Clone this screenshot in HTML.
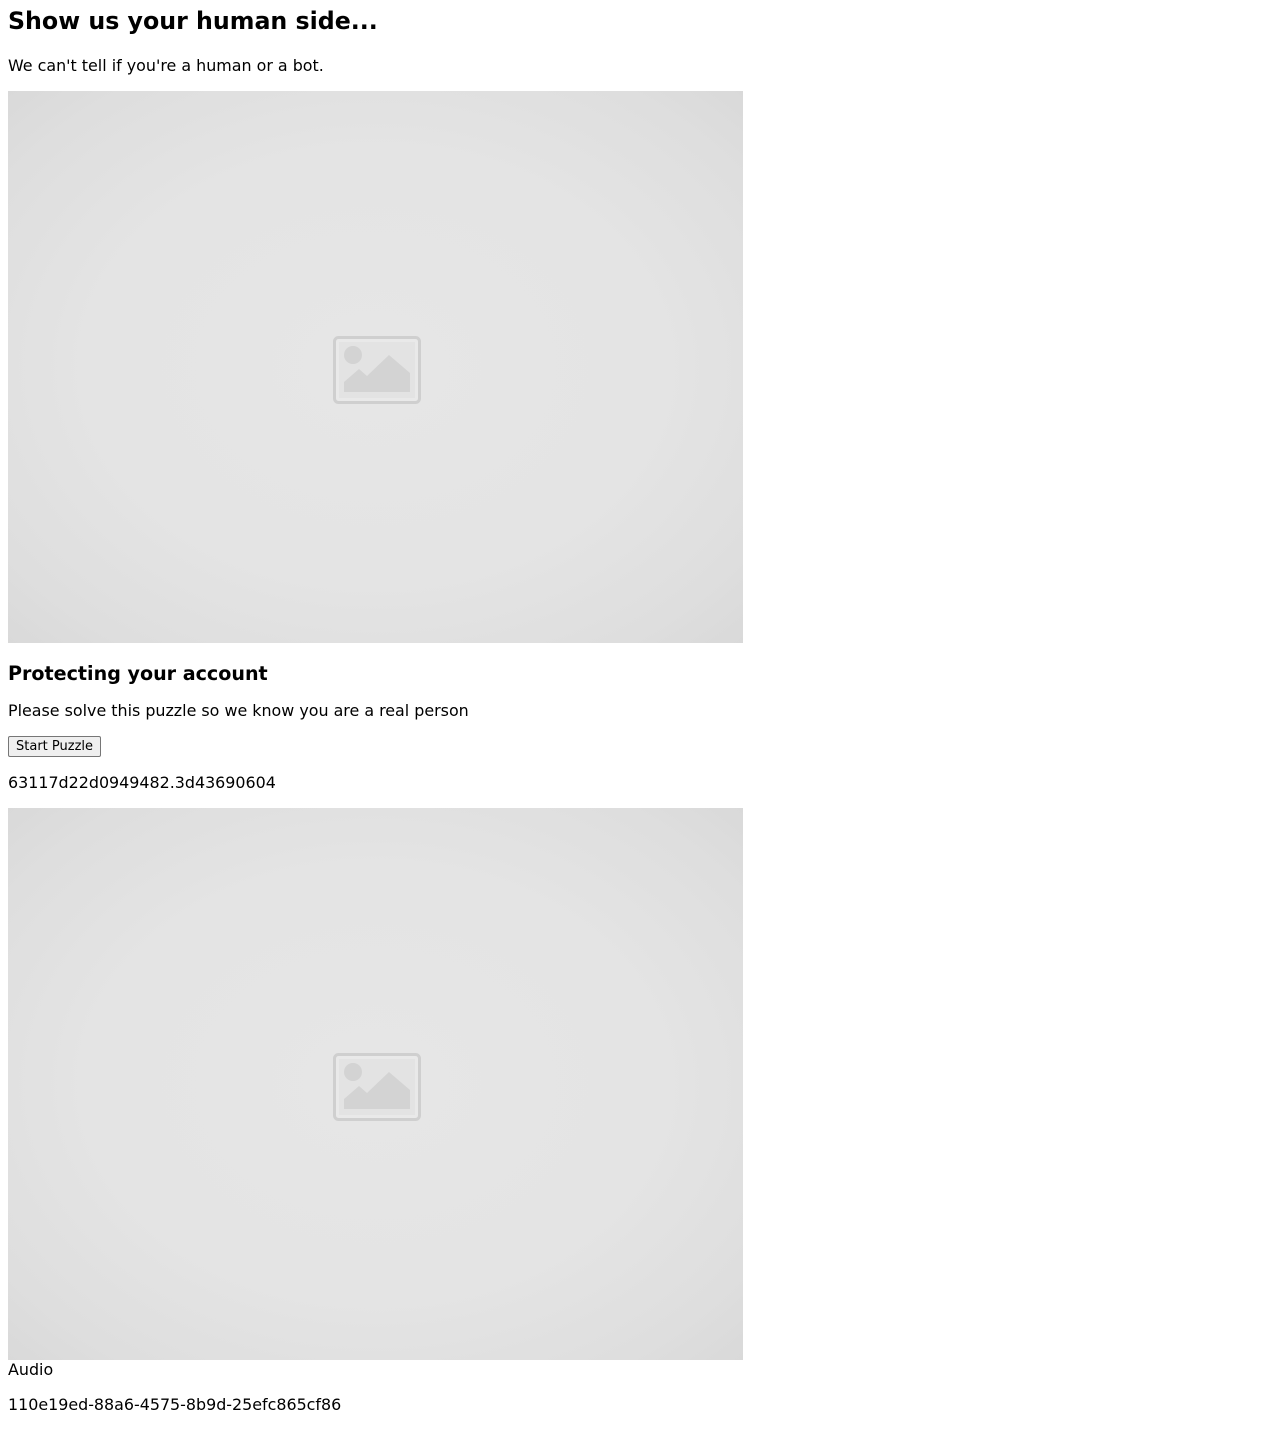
<!DOCTYPE html>
<html><head><meta charset="utf-8"><style>
html,body{margin:0;padding:0;background:#fff;width:1280px;height:1430px;overflow:hidden}
body{font-family:"DejaVu Sans","Liberation Sans",sans-serif;color:#000;position:relative}
.t{position:absolute;left:8px;white-space:nowrap;line-height:1}
.img{position:absolute;left:8px;width:735px;height:552px;
background:radial-gradient(ellipse at 50% 50%,#e6e6e6 0%,#e4e4e4 55%,#dedede 85%,#d9d9d9 100%)}
.img svg{position:absolute;left:325px;top:245px}
.btn{position:absolute;left:8px;top:736px;width:91px;height:19px;border:1px solid #767676;border-radius:2px;background:#efefef;font-size:13px;line-height:20px;text-align:center}
.b{font-size:15.9px}
</style></head><body>
<div class="t" style="top:10px;font-size:23.7px;font-weight:bold">Show us your human side...</div>
<div class="t b" style="top:58px">We can't tell if you're a human or a bot.</div>
<div class="img" style="top:91px"><svg width="88" height="68" viewBox="0 0 88 68"><rect x="1.5" y="1.5" width="85" height="65" rx="4" fill="#e9e9e9" stroke="#cfcfcf" stroke-width="3"/><rect x="6" y="6" width="76" height="56" fill="#e3e3e3"/><circle cx="20" cy="19" r="9" fill="#d3d3d3"/><path d="M11 56 V46 L26 33 L34 40 L56 19 L77 37 V56 Z" fill="#d3d3d3"/></svg></div>
<div class="t" style="top:664px;font-size:19.1px;font-weight:bold">Protecting your account</div>
<div class="t b" style="top:703px">Please solve this puzzle so we know you are a real person</div>
<div class="btn">Start Puzzle</div>
<div class="t b" style="top:775px">63117d22d0949482.3d43690604</div>
<div class="img" style="top:808px"><svg width="88" height="68" viewBox="0 0 88 68"><rect x="1.5" y="1.5" width="85" height="65" rx="4" fill="#e9e9e9" stroke="#cfcfcf" stroke-width="3"/><rect x="6" y="6" width="76" height="56" fill="#e3e3e3"/><circle cx="20" cy="19" r="9" fill="#d3d3d3"/><path d="M11 56 V46 L26 33 L34 40 L56 19 L77 37 V56 Z" fill="#d3d3d3"/></svg></div>
<div class="t b" style="top:1362px">Audio</div>
<div class="t b" style="top:1397px">110e19ed-88a6-4575-8b9d-25efc865cf86</div>
</body></html>
